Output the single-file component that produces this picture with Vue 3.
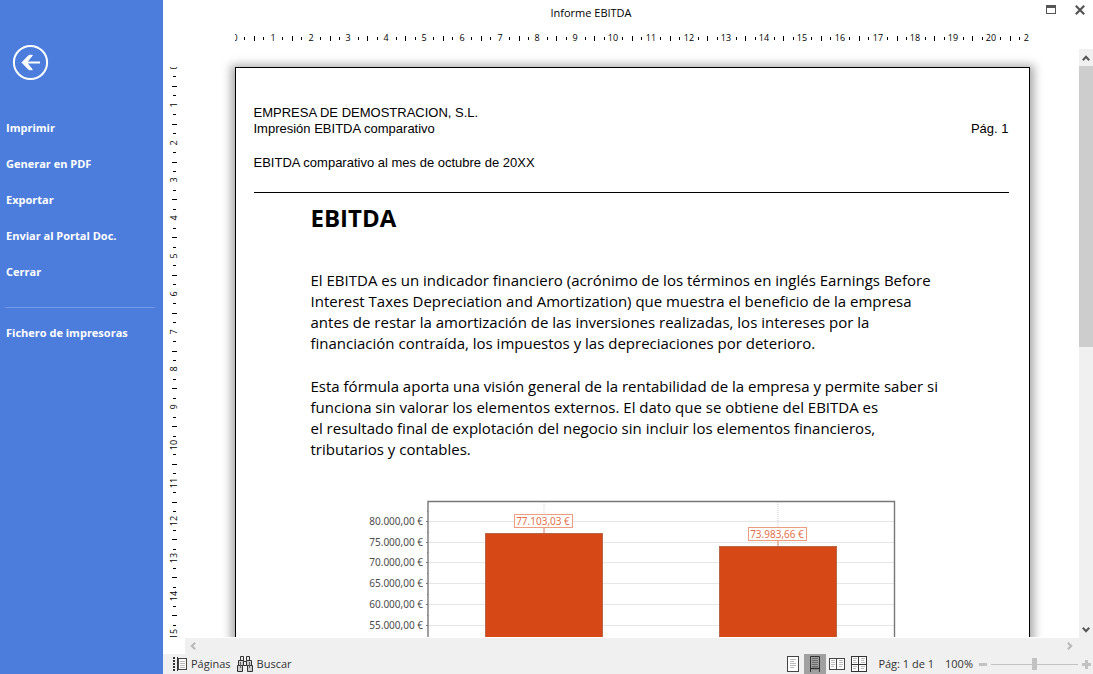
<script setup>
import { ref } from 'vue'

const actions = ['Imprimir', 'Generar en PDF', 'Exportar', 'Enviar al Portal Doc.', 'Cerrar']
const zoom = ref(50)

const CM = 37.8
function rulerMarks(count) {
  const labels = []
  const ticks = []
  for (let n = 0; n <= count; n++) {
    labels.push({ n, pos: Math.round(n * CM) })
    for (let q = 1; q < 4; q++) {
      ticks.push({ pos: Math.round((n + q / 4) * CM), long: q === 2 })
    }
  }
  return { labels, ticks }
}
const across = rulerMarks(21)
const down = rulerMarks(15)

const axis = [
  { text: '80.000,00 €', y: 31 },
  { text: '75.000,00 €', y: 52 },
  { text: '70.000,00 €', y: 72 },
  { text: '65.000,00 €', y: 93 },
  { text: '60.000,00 €', y: 114 },
  { text: '55.000,00 €', y: 135 }
]
const bars = [
  { text: '77.103,03 €', x: 125, top: 43 },
  { text: '73.983,66 €', x: 359, top: 56 }
]
</script>

<template>
  <div class="app">
    <aside class="side">
      <button class="back" aria-label="Volver">
        <svg width="37" height="37" viewBox="0 0 37 37">
          <circle cx="18.5" cy="18.5" r="16.6" />
          <path class="shaft" d="M11 18.5H28" />
          <path class="head" d="M10 18.5L17 11.3H20.4L14.6 18.5L20.4 25.7H17Z" />
        </svg>
      </button>
      <nav>
        <button v-for="a in actions" :key="a" class="item">{{ a }}</button>
        <hr />
        <button class="item">Fichero de impresoras</button>
      </nav>
    </aside>

    <main class="main">
      <header class="title">
        <h1>Informe EBITDA</h1>
        <div class="window">
          <button aria-label="Maximizar">
            <svg width="10" height="10" viewBox="0 0 10 10"><path d="M0 0H10V9H0ZM1 3V8H9V3Z" fill="#555" fill-rule="evenodd" /></svg>
          </button>
          <button aria-label="Cerrar ventana">
            <svg width="10" height="10" viewBox="0 0 10 10"><path d="M.8 .8L9.2 9.2M9.2 .8L.8 9.2" stroke="#555" stroke-width="2.2" /></svg>
          </button>
        </div>
      </header>

      <div class="ruler-x">
        <svg width="794" height="18" aria-hidden="true">
          <rect v-for="t in across.ticks" :key="t.pos" :x="t.pos" :y="t.long ? 7 : 8" width="1" :height="t.long ? 5 : 3" />
          <text v-for="l in across.labels" :key="l.n" :x="l.pos" y="12" text-anchor="middle">{{ l.n }}</text>
        </svg>
      </div>

      <div class="work">
        <svg class="ruler-y" width="22" aria-hidden="true">
          <svg y="18" width="22" height="570">
            <rect v-for="t in down.ticks" :key="t.pos" :x="t.long ? 9 : 10" :y="t.pos" :width="t.long ? 5 : 3" height="1" />
            <text v-for="l in down.labels" :key="l.n" :transform="`translate(14 ${l.pos}) rotate(-90)`" text-anchor="middle">{{ l.n }}</text>
          </svg>
        </svg>

        <div class="canvas">
          <article class="sheet">
            <div class="head">
              <p>EMPRESA DE DEMOSTRACION, S.L.</p>
              <p class="split"><span>Impresión EBITDA comparativo</span><span>Pág. 1</span></p>
              <p class="period">EBITDA comparativo al mes de octubre de 20XX</p>
            </div>
            <div class="body">
              <h2>EBITDA</h2>
              <p>
                El EBITDA es un indicador financiero (acrónimo de los términos en inglés Earnings Before<br />
                Interest Taxes Depreciation and Amortization) que muestra el beneficio de la empresa<br />
                antes de restar la amortización de las inversiones realizadas, los intereses por la<br />
                financiación contraída, los impuestos y las depreciaciones por deterioro.
              </p>
              <p>
                Esta fórmula aporta una visión general de la rentabilidad de la empresa y permite saber si<br />
                funciona sin valorar los elementos externos. El dato que se obtiene del EBITDA es<br />
                el resultado final de explotación del negocio sin incluir los elementos financieros,<br />
                tributarios y contables.
              </p>
              <svg class="chart" width="540" height="180" role="img" aria-label="EBITDA comparativo">
                <g v-for="a in axis" :key="a.y">
                  <path :d="`M69 ${a.y + 0.5}H534`" stroke="#e6e6e6" />
                  <path :d="`M66 ${a.y + 0.5}H68M67 ${a.y - 9.5}H68`" stroke="#777" />
                  <text :x="63" :y="a.y + 4" text-anchor="end" fill="#4c4c4c">{{ a.text }}</text>
                </g>
                <g v-for="b in bars" :key="b.x">
                  <path :d="`M${b.x + 59} 12V${b.top}`" stroke="#d0d0d0" stroke-dasharray="1 1" />
                  <path :d="`M${b.x + 59} ${b.top - 6}V${b.top}`" stroke="#e58a6c" />
                  <rect :x="b.x + 0.5" :y="b.top + 0.5" width="117" height="200" fill="#d64816" stroke="#b5674a" />
                  <rect :x="b.x + 29.5" :y="b.top - 18.5" width="58" height="13" fill="#fff" stroke="#ee9b80" />
                  <text :x="b.x + 58" :y="b.top - 8" text-anchor="middle" fill="#e4714c">{{ b.text }}</text>
                </g>
                <path d="M68 180V11.500H534.500V180" fill="none" stroke="#777" stroke-width="1.400" />
              </svg>
            </div>
          </article>
        </div>

        <div class="bar-y">
          <button aria-label="Subir">
            <svg width="8" height="6" viewBox="0 0 8 6"><path d="M.8 5.200L4 1.800L7.200 5.200" stroke="#555" stroke-width="2" fill="none" /></svg>
          </button>
          <div class="track"><div class="thumb"></div></div>
          <button aria-label="Bajar">
            <svg width="8" height="6" viewBox="0 0 8 6"><path d="M.8 .8L4 4.200L7.200 .8" stroke="#555" stroke-width="2" fill="none" /></svg>
          </button>
        </div>
      </div>

      <div class="bar-x">
        <button aria-label="Izquierda">
          <svg width="6" height="8" viewBox="0 0 6 8"><path d="M5.200 .8L1.800 4L5.200 7.200" stroke="#b8b8b8" stroke-width="2" fill="none" /></svg>
        </button>
        <button aria-label="Derecha">
          <svg width="6" height="8" viewBox="0 0 6 8"><path d="M.8 .8L4.200 4L.8 7.200" stroke="#b8b8b8" stroke-width="2" fill="none" /></svg>
        </button>
      </div>

      <footer class="status">
        <button class="tool">
          <svg width="14" height="14" viewBox="0 0 14 14">
            <path d="M1 0V14" stroke="#333" stroke-width="2" stroke-dasharray="2 1" />
            <path d="M4.500 0V14" stroke="#333" />
            <rect x="5.500" y="1.500" width="8" height="11" fill="#fff" stroke="#444" />
            <path d="M7 4.500H12M7 6.500H12M7 8.500H12M7 10.500H12" stroke="#bbb" />
          </svg>
          Páginas
        </button>
        <button class="tool">
          <svg width="16" height="16" viewBox="0 0 16 16">
            <g fill="#ccc" stroke="#333">
              <path d="M3.500 .5H6.500V4.500H3.500ZM9.500 .5H12.500V4.500H9.500Z" fill="#f0f0f0" />
              <path d="M1.500 4.500H6.500V9.500H1.500ZM9.500 4.500H14.500V9.500H9.500Z" />
              <path d="M.5 9.500H5.500V15.500H.5ZM10.500 9.500H15.500V15.500H10.500Z" />
              <path d="M6.500 5.500H9.500V9.500H6.500Z" fill="#f0f0f0" />
              <path d="M3.500 6V12M12.500 6V12" stroke="#666" />
            </g>
          </svg>
          Buscar
        </button>

        <div class="views">
          <button aria-label="Página completa">
            <svg width="12" height="16" viewBox="0 0 12 16">
              <rect x=".5" y=".5" width="11" height="15" fill="#fff" stroke="#444" />
              <path d="M3 3.500H9M3 5.500H7M3 7.500H9M3 9.500H9M3 11.500H7" stroke="#bbb" />
            </svg>
          </button>
          <button class="on" aria-label="Ancho de página">
            <svg width="10" height="16" viewBox="0 0 10 16">
              <path d="M.5 16V.5H9.500V16" fill="none" stroke="#333" />
              <path d="M0 12.500H10" stroke="#333" stroke-width="1.500" />
              <path d="M2 2.500H8M2 4.500H8M2 6.500H8M2 8.500H8M2 10.500H8" stroke="#6c6c6c" />
            </svg>
          </button>
          <button aria-label="Dos páginas">
            <svg width="16" height="12" viewBox="0 0 16 12">
              <rect x=".5" y=".5" width="15" height="11" fill="#fff" stroke="#444" />
              <path d="M7.500 0V12" stroke="#444" />
              <path d="M2 2.500H6M2 4.500H6M2 6.500H6M2 8.500H5M10 2.500H14M10 4.500H14M10 6.500H14M10 8.500H13" stroke="#bbb" />
            </svg>
          </button>
          <button aria-label="Cuatro páginas">
            <svg width="16" height="16" viewBox="0 0 16 16">
              <rect x=".5" y=".5" width="15" height="15" fill="#fff" stroke="#333" />
              <path d="M2 2.500H6M2 4.500H5M10 2.500H14M10 4.500H13M2 10.500H6M2 12.500H5M10 10.500H14M10 12.500H13M2 6.500H6M10 6.500H14" stroke="#bbb" />
              <path d="M7.500 0V16M0 8.500H16" stroke="#333" />
            </svg>
          </button>
        </div>
        <span class="pages">Pág: 1 de 1</span>
        <span class="percent">100%</span>
        <button class="step" aria-label="Reducir"><svg width="9" height="9"><path d="M0 4.500H8" stroke="#c2c2c2" stroke-width="3" /></svg></button>
        <input v-model="zoom" type="range" min="0" max="100" aria-label="Zoom" />
        <button class="step" aria-label="Ampliar"><svg width="9" height="9"><path d="M0 4.500H9M4.500 0V9" stroke="#c2c2c2" stroke-width="3" /></svg></button>
      </footer>
    </main>
  </div>
</template>

<style>
html,
body {
  margin: 0;
  overflow: hidden;
}
</style>

<style scoped>
.app {
  display: flex;
  height: 100vh;
  background: #fff;
  color: #000;
  font-family: "Open Sans", "Noto Sans", sans-serif;
  font-size: 11px;
}
button {
  display: flex;
  align-items: center;
  padding: 0;
  border: 0;
  background: none;
  color: inherit;
  font: inherit;
}
svg {
  display: block;
  flex: none;
}
p,
h1,
h2 {
  margin: 0;
}

.side {
  flex: none;
  width: 163px;
  box-sizing: border-box;
  padding: 44px 8px 0 6px;
  background: #4d7ddc;
  color: #fff;
}
.back {
  margin: 0 0 28px 6px;
}
.back circle,
.back .shaft {
  fill: none;
  stroke: #fff;
  stroke-width: 2;
}
.back .head {
  fill: #fff;
  stroke: #fff;
}
.item {
  width: 100%;
  height: 36px;
  font-size: 11px;
  font-weight: 700;
  white-space: nowrap;
}
hr {
  height: 1px;
  margin: 18px 0 6px -1px;
  border: 0;
  background: #7398e8;
}

.main {
  display: flex;
  flex: 1;
  flex-direction: column;
  min-width: 0;
}
.title {
  display: grid;
  grid-template-columns: 1fr auto 1fr;
  flex: none;
  height: 29px;
  padding: 0 8px 0 0;
}
.title h1 {
  grid-column: 2;
  margin-right: 66px;
  font-size: 11px;
  font-weight: 400;
  line-height: 26px;
}
.window {
  display: flex;
  justify-content: flex-end;
  gap: 19px;
  height: 19px;
}

.ruler-x {
  display: flex;
  flex: none;
  justify-content: center;
  height: 20px;
  padding: 0 14px 0 22px;
}
.ruler-x text,
.ruler-y text {
  font-size: 9px;
}
.work {
  display: flex;
  flex: 1;
  min-height: 0;
}
.ruler-y {
  height: 100%;
}
.canvas {
  flex: 1;
  min-width: 0;
  margin-bottom: 1px;
  overflow: hidden;
}
.sheet {
  box-sizing: border-box;
  width: 795px;
  min-height: 1123px;
  margin: 18px auto 0;
  padding: 37px 20px 0 18px;
  border: 1px solid #000;
  background: #fff;
  box-shadow: 0 2px 9px 4px #aaa;
}
.sheet .head {
  padding-bottom: 21px;
  border-bottom: 1px solid #000;
  font-family: "Liberation Sans", Arial, sans-serif;
  font-size: 13px;
  line-height: 16px;
}
.split {
  display: flex;
  justify-content: space-between;
}
.period {
  margin-top: 18px;
}
.body {
  padding-left: 57px;
  font-size: 15px;
  line-height: 21px;
  white-space: nowrap;
}
.body h2 {
  margin: 8px 0 36px;
  font-size: 24px;
  font-weight: 700;
  line-height: 33px;
}
.body p + p {
  margin-top: 22px;
}
.chart {
  margin: 30px 0 0 49px;
}
.chart text {
  font-family: "Noto Sans", sans-serif;
  font-size: 10px;
}

.bar-y {
  display: flex;
  flex: none;
  flex-direction: column;
  width: 14px;
  background: #f0f0f0;
}
.bar-y button {
  justify-content: center;
  height: 17px;
}
.track {
  flex: 1;
}
.thumb {
  height: 50.6%;
  background: #cdcdcd;
}
.bar-x {
  display: flex;
  flex: none;
  justify-content: space-between;
  height: 16px;
  margin-left: 22px;
  padding: 0 20px 0 5px;
  background: #f0f0f0;
}

.status {
  display: flex;
  flex: none;
  align-items: center;
  height: 20px;
  padding: 0 2px 0 10px;
  background: #f0f0f0;
  color: #333;
  line-height: 14px;
  white-space: nowrap;
}
.tool {
  gap: 4px;
  margin-right: 6px;
}
.views {
  display: flex;
  height: 20px;
  margin-left: auto;
}
.views button {
  justify-content: center;
  width: 22px;
}
.views .on {
  background: #a0a0a0;
}
.pages {
  margin: 0 11px 0 8px;
}
.percent {
  margin-right: 6px;
}
input {
  width: 87px;
  height: 12px;
  margin: 0 4px 0 3px;
  appearance: none;
  background: linear-gradient(#c2c2c2, #c2c2c2) center / 100% 1px no-repeat;
}
input::-webkit-slider-thumb {
  width: 5px;
  height: 12px;
  appearance: none;
  background: #c2c2c2;
}
</style>
